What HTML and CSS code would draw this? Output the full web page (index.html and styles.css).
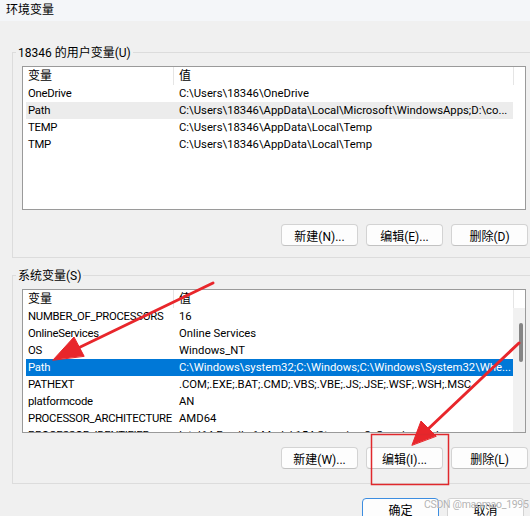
FILE: index.html
```html
<!DOCTYPE html>
<html lang="zh-CN">
<head>
<meta charset="utf-8">
<title>环境变量</title>
<link rel="stylesheet" href="styles.css">
</head>
<body>
<div class="window">
  <div class="titlebar">环境变量</div>
  <div class="content">
    <fieldset class="group group-user">
      <legend>18346 的用户变量(U)</legend>
      <div class="list">
        <div class="rows">
          <div class="row head"><span class="c1">变量</span><span class="c2">值</span></div>
          <div class="row"><span class="c1">OneDrive</span><span class="c2">C:\Users\18346\OneDrive</span></div>
          <div class="row sel-gray"><span class="c1">Path</span><span class="c2">C:\Users\18346\AppData\Local\Microsoft\WindowsApps;D:\co...</span></div>
          <div class="row"><span class="c1">TEMP</span><span class="c2">C:\Users\18346\AppData\Local\Temp</span></div>
          <div class="row"><span class="c1">TMP</span><span class="c2">C:\Users\18346\AppData\Local\Temp</span></div>
        </div>
        <div class="scrollcol"><div class="headcap"></div></div>
      </div>
      <div class="btns">
        <button class="btn">新建(N)...</button>
        <button class="btn">编辑(E)...</button>
        <button class="btn">删除(D)</button>
      </div>
    </fieldset>

    <fieldset class="group group-sys">
      <legend>系统变量(S)</legend>
      <div class="list">
        <div class="rows">
          <div class="row head"><span class="c1">变量</span><span class="c2">值</span></div>
          <div class="row"><span class="c1">NUMBER_OF_PROCESSORS</span><span class="c2">16</span></div>
          <div class="row"><span class="c1">OnlineServices</span><span class="c2">Online Services</span></div>
          <div class="row"><span class="c1">OS</span><span class="c2">Windows_NT</span></div>
          <div class="row sel-blue"><span class="c1">Path</span><span class="c2">C:\Windows\system32;C:\Windows;C:\Windows\System32\Whe...</span></div>
          <div class="row"><span class="c1">PATHEXT</span><span class="c2">.COM;.EXE;.BAT;.CMD;.VBS;.VBE;.JS;.JSE;.WSF;.WSH;.MSC</span></div>
          <div class="row"><span class="c1">platformcode</span><span class="c2">AN</span></div>
          <div class="row"><span class="c1">PROCESSOR_ARCHITECTURE</span><span class="c2">AMD64</span></div>
          <div class="row"><span class="c1">PROCESSOR_IDENTIFIER</span><span class="c2">Intel64 Family 6 Model 154 Stepping 3, GenuineIntel</span></div>
        </div>
        <div class="scrollcol track"><div class="headcap"></div><div class="thumb"></div></div>
      </div>
      <div class="btns">
        <button class="btn">新建(W)...</button>
        <button class="btn">编辑(I)...</button>
        <button class="btn">删除(L)</button>
      </div>
    </fieldset>

    <div class="footer">
      <button class="btn btn-default">确定</button>
      <button class="btn">取消</button>
    </div>
  </div>

  <svg class="annot" width="530" height="516" viewBox="0 0 530 516">
    <g stroke="#e8262b" stroke-width="3" stroke-linecap="round" fill="#e8262b">
      <line x1="213" y1="283" x2="72" y2="351"/>
      <polygon points="53,360 74,337 84,356" stroke-width="1" stroke-linejoin="round"/>
      <line x1="519" y1="343" x2="426" y2="431"/>
      <polygon points="412,445 421,421 436,436" stroke-width="1" stroke-linejoin="round"/>
    </g>
    <rect x="371.5" y="434.5" width="77" height="50" fill="none" stroke="#e0282c" stroke-width="1.5"/>
  </svg>
  <div class="watermark">CSDN @maomao_1995</div>
</div>
</body>
</html>
```

FILE: styles.css
```css
html, body {
  margin: 0;
  padding: 0;
  overflow: hidden;
}
body {
  width: 530px;
  height: 516px;
  background: #f0f0f0;
  font-family: Roboto, "Noto Sans CJK SC", sans-serif;
  font-size: 12px;
  color: #000;
}
.window {
  position: relative;
  width: 530px;
  height: 516px;
  overflow: hidden;
  background: #f0f0f0;
}
.titlebar {
  height: 21px;
  line-height: 21px;
  padding-left: 6px;
  background: #f4f6f9;
  font-size: 12px;
}
.content {
  padding-top: 23px;
}
.group {
  box-sizing: border-box;
  width: 528px;
  margin: 0 0 0 12px;
  border: 1px solid #dcdcdc;
  padding: 6px 11px 11px 9px;
  min-width: 0;
}
.group legend {
  margin-left: -6px;
  padding: 0 2px;
  line-height: 18px;
  height: 16px;
}
.group-sys {
  margin-top: 9px;
  padding-top: 6px;
  padding-bottom: 14px;
}
.list {
  display: flex;
  box-sizing: border-box;
  width: 504px;
  height: 144px;
  border: 1px solid #9a9a9a;
  background: #fff;
  overflow: hidden;
}
.rows {
  flex: 1;
  min-width: 0;
  padding-left: 3px;
}
.row {
  display: flex;
  box-sizing: border-box;
  height: 17px;
  padding-top: 1px;
  line-height: 16px;
  white-space: nowrap;
  font-size: 11.3px;
}
.row.head {
  height: 18px;
  padding-top: 1px;
  line-height: 17px;
  font-size: 12px;
}
.c1 {
  flex: none;
  box-sizing: border-box;
  width: 148px;
  padding-left: 2px;
  overflow: hidden;
  letter-spacing: -0.25px;
}
.head .c1 {
  letter-spacing: 0;
  margin-top: -1px;
  padding-top: 1px;
  border-right: 1px solid #e5e5e5;
}
.c2 {
  flex: 1;
  min-width: 0;
  padding-left: 5px;
  overflow: hidden;
}
.sel-gray {
  background: #ececec;
}
.sel-blue {
  background: #0078d7;
  color: #fff;
}
.scrollcol {
  flex: none;
  width: 12px;
}
.headcap {
  height: 18px;
  border-left: 1px solid #e5e5e5;
  background: #fff;
}
.track {
  background: #f1f1f1;
}
.thumb {
  margin: 15px 0 0 6px;
  width: 4px;
  height: 39px;
  border-radius: 2px;
  background: #858585;
}
.btns {
  display: flex;
  justify-content: flex-end;
  gap: 8px;
  margin-top: 14px;
}
.btn {
  box-sizing: border-box;
  width: 77px;
  height: 22px;
  padding: 0;
  font: inherit;
  color: #000;
  background: #fdfdfd;
  border: 1px solid #d3d3d3;
  border-bottom-color: #c2c2c2;
  border-radius: 4px;
}
.footer {
  display: flex;
  justify-content: flex-end;
  gap: 8px;
  margin-top: 14px;
  padding-right: 6px;
}
.btn-default {
  border: 1px solid #3c8de0;
}
.annot {
  position: absolute;
  left: 0;
  top: 0;
  pointer-events: none;
}
.watermark {
  position: absolute;
  left: 424px;
  top: 498px;
  font-size: 10.5px;
  letter-spacing: -0.3px;
  color: rgba(165, 165, 165, 0.85);
  text-shadow: 0 0 1px #fff;
  white-space: nowrap;
}
```
